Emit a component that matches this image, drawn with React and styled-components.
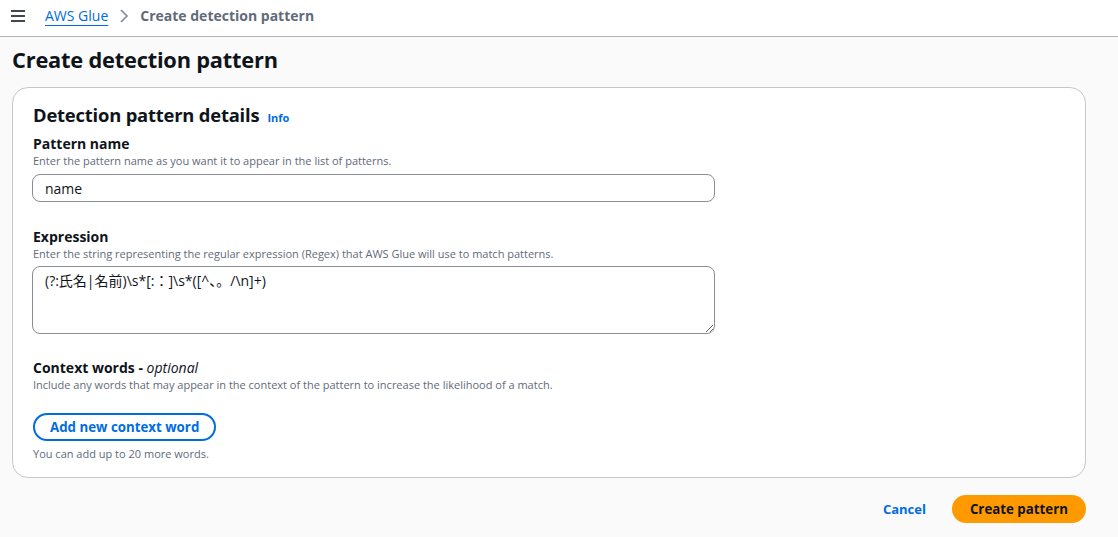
import React from "react";
import styled, { createGlobalStyle } from "styled-components";

const GlobalStyle = createGlobalStyle`
  html, body {
    margin: 0;
    padding: 0;
    background: #fafafa;
    font-family: "Open Sans", "Noto Sans", "Noto Sans CJK JP", sans-serif;
    color: #0f141a;
  }
  * {
    box-sizing: border-box;
  }
`;

const Page = styled.div`
  width: 1118px;
  height: 537px;
  background: #fafafa;
  overflow: hidden;
`;

const TopBar = styled.div`
  height: 37px;
  background: #ffffff;
  border-bottom: 1px solid #b4b4bb;
  display: flex;
  align-items: center;
  padding: 0 0 0 10px;
`;

const MenuButton = styled.button`
  background: transparent;
  border: none;
  padding: 0;
  width: 16px;
  height: 16px;
  display: flex;
  align-items: center;
  justify-content: center;
  color: #424650;
  margin-right: 19px;
  margin-top: -4px;
`;

const Crumbs = styled.nav`
  display: flex;
  align-items: center;
  gap: 11px;
  font-size: 14px;
  margin-top: -5px;
`;

const CrumbLink = styled.a`
  color: #006ce0;
  text-decoration: underline;
  text-underline-offset: 4px;
  text-decoration-thickness: 1px;
`;

const CrumbCurrent = styled.span`
  color: #5f6b7a;
  font-weight: 700;
`;

const Content = styled.main`
  padding: 8px 32px 0 12px;
`;

const Title = styled.h1`
  margin: 0 0 12px;
  font-size: 21.8px;
  line-height: 30px;
  font-weight: 700;
  letter-spacing: -0.2px;
`;

const Card = styled.section`
  background: #ffffff;
  border: 1px solid #c6c6cd;
  border-radius: 16px;
  padding: 13px 20px 15px 20px;
`;

const CardHeader = styled.div`
  display: flex;
  align-items: baseline;
  gap: 8px;
  margin-bottom: 6px;
`;

const CardTitle = styled.h2`
  margin: 0;
  font-size: 18.4px;
  line-height: 28px;
  font-weight: 700;
  letter-spacing: -0.2px;
`;

const InfoLink = styled.a`
  color: #006ce0;
  font-size: 11px;
  font-weight: 700;
`;

const Field = styled.div`
  margin-bottom: ${p => p.gap || 0}px;
`;

const Label = styled.div`
  font-size: 14px;
  font-weight: 700;
  line-height: 18px;
`;

const Description = styled.div`
  font-size: 11px;
  line-height: 16px;
  color: #5f6b7a;
  margin-bottom: ${p => p.below || 0}px;
`;

const Optional = styled.i`
  font-weight: 400;
  font-style: italic;
`;

const Input = styled.input`
  display: block;
  width: 683px;
  height: 28px;
  border: 1px solid #8c8c94;
  border-radius: 8px;
  padding: 0 12px;
  font: inherit;
  font-size: 14px;
  color: #0f141a;
  background: #ffffff;
  margin-left: -1px;
`;

const TextArea = styled.textarea`
  display: block;
  width: 683px;
  height: 68px;
  border: 1px solid #8c8c94;
  border-radius: 8px;
  padding: 4px 12px;
  font-family: "Open Sans", "Noto Sans CJK JP", sans-serif;
  font-size: 14px;
  line-height: 20px;
  color: #0f141a;
  background: #ffffff;
  resize: both;
  margin-left: -1px;
`;

const OutlineButton = styled.button`
  height: 28px;
  padding: 0 15px;
  border: 2px solid #006ce0;
  border-radius: 20px;
  background: #ffffff;
  color: #006ce0;
  font-family: inherit;
  font-size: 13.3px;
  font-weight: 700;
  margin: 20px 0 5px;
`;

const Hint = styled.div`
  font-size: 11px;
  line-height: 16px;
  color: #5f6b7a;
`;

const Footer = styled.div`
  display: flex;
  justify-content: flex-end;
  align-items: center;
  gap: 26px;
  margin-top: 17px;
`;

const LinkButton = styled.button`
  background: transparent;
  border: none;
  color: #006ce0;
  font-family: inherit;
  font-size: 13px;
  font-weight: 700;
  padding: 0;
`;

const PrimaryButton = styled.button`
  height: 28px;
  padding: 0 18px;
  border: none;
  border-radius: 20px;
  background: #ff9900;
  color: #0f141a;
  font-family: inherit;
  font-size: 13.3px;
  font-weight: 700;
  margin-right: 0;
`;

const MenuIcon = () => (
  <svg width="14" height="12" viewBox="0 0 14 12" fill="none">
    <path d="M0 1h14M0 6h14M0 11h14" stroke="currentColor" strokeWidth="2" />
  </svg>
);

const ChevronRight = () => (
  <svg width="10" height="14" viewBox="0 0 10 14" fill="none">
    <path d="M2 1l6 6-6 6" stroke="#7d8998" strokeWidth="1.6" />
  </svg>
);

const App = () => {
  return (
    <Page>
      <GlobalStyle />
      <TopBar>
        <MenuButton aria-label="Open navigation">
          <MenuIcon />
        </MenuButton>
        <Crumbs>
          <CrumbLink>AWS Glue</CrumbLink>
          <ChevronRight />
          <CrumbCurrent>Create detection pattern</CrumbCurrent>
        </Crumbs>
      </TopBar>
      <Content>
        <Title>Create detection pattern</Title>
        <Card>
          <CardHeader>
            <CardTitle>Detection pattern details</CardTitle>
            <InfoLink>Info</InfoLink>
          </CardHeader>
          <Field gap={26}>
            <Label>Pattern name</Label>
            <Description below={5}>
              Enter the pattern name as you want it to appear in the list of patterns.
            </Description>
            <Input defaultValue="name" />
          </Field>
          <Field gap={25}>
            <Label>Expression</Label>
            <Description below={4}>
              Enter the string representing the regular expression (Regex) that AWS Glue will use to match patterns.
            </Description>
            <TextArea defaultValue={"(?:氏名|名前)\\s*[:：]\\s*([^、。/\\n]+)"} />
          </Field>
          <Field>
            <Label>
              Context words - <Optional>optional</Optional>
            </Label>
            <Description>
              Include any words that may appear in the context of the pattern to increase the likelihood of a match.
            </Description>
            <OutlineButton>Add new context word</OutlineButton>
            <Hint>You can add up to 20 more words.</Hint>
          </Field>
        </Card>
        <Footer>
          <LinkButton>Cancel</LinkButton>
          <PrimaryButton>Create pattern</PrimaryButton>
        </Footer>
      </Content>
    </Page>
  );
};

export default App;
